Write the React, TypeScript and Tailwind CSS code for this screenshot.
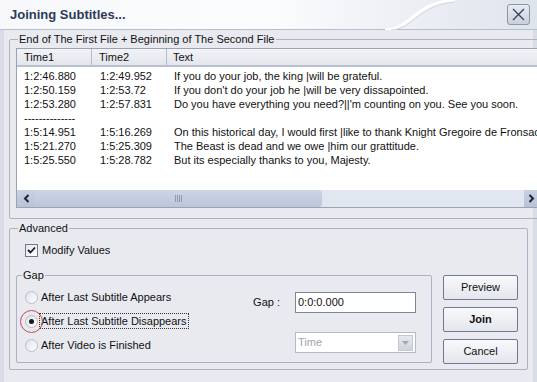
import React from 'react';

const rows = [
  { t1: '1:2:46.880', t2: '1:2:49.952', text: 'If you do your job, the king |will be grateful.' },
  { t1: '1:2:50.159', t2: '1:2:53.72', text: "If you don't do your job he |will be very dissapointed." },
  { t1: '1:2:53.280', t2: '1:2:57.831', text: "Do you have everything you need?||'m counting on you. See you soon." },
  { t1: '--------------', t2: '', text: '' },
  { t1: '1:5:14.951', t2: '1:5:16.269', text: 'On this historical day, I would first |like to thank Knight Gregoire de Fronsac' },
  { t1: '1:5:21.270', t2: '1:5:25.309', text: 'The Beast is dead and we owe |him our grattitude.' },
  { t1: '1:5:25.550', t2: '1:5:28.782', text: 'But its especially thanks to you, Majesty.' },
];

function Radio({ checked, label, focused }: { checked?: boolean; label: string; focused?: boolean }) {
  return (
    <div className="flex items-center h-[24px]">
      <div className="relative w-[13px] h-[13px] ml-[8px] mr-[2px]">
        {focused && (
          <div className="absolute -left-[5px] -top-[5px] w-[23px] h-[23px] rounded-full border border-[#c8474f]" />
        )}
        <div className="w-[13px] h-[13px] rounded-full border border-[#b7bcc8] bg-gradient-to-br from-[#dfe2e9] to-white flex items-center justify-center">
          {checked && <div className="w-[5px] h-[5px] rounded-full bg-[#1a1a1a]" />}
        </div>
      </div>
      <span className={focused ? 'outline outline-1 outline-dotted outline-[#333] px-[1px] leading-[14px]' : 'px-[1px]'}>
        {label}
      </span>
    </div>
  );
}

function Button({ children, bold }: { children: React.ReactNode; bold?: boolean }) {
  return (
    <button className={`w-[75px] h-[25px] border border-[#6f7890] rounded-[2px] bg-gradient-to-b from-[#f8f9fb] to-[#e3e6ec] text-[#111] ${bold ? 'font-bold' : ''}`}>
      {children}
    </button>
  );
}

export default function App() {
  return (
    <div
      className="w-[537px] h-[382px] bg-[#e4e7ee] flex flex-col text-[11px] text-[#111] overflow-hidden"
      style={{ fontFamily: '"Liberation Sans", Arial, sans-serif' }}
    >
      {/* title bar */}
      <div className="relative h-[31px] flex items-center justify-between border-b border-[#b6bdcc] bg-gradient-to-r from-[#f7f8fb] via-[#fbfcfd] to-[#dfe3ec] pl-[10px] pr-[7px]">
        <span className="text-[13px] font-bold text-[#2c3a58]">Joining Subtitles...</span>
        <svg className="absolute left-[385px] top-0" width="70" height="30" viewBox="0 0 70 30">
          <path d="M0 30 C25 30 30 2 70 0" fill="none" stroke="#ffffff" strokeWidth="3" />
          <path d="M6 30 C30 28 35 4 70 2" fill="none" stroke="#d2d7e2" strokeWidth="1" />
        </svg>
        <div className="w-[23px] h-[21px] rounded-[3px] border border-[#8c95ab] bg-gradient-to-b from-[#e9ecf3] to-[#c9cfdc] flex items-center justify-center">
          <svg width="13" height="13" viewBox="0 0 13 13">
            <path d="M1 1 L12 12 M12 1 L1 12" stroke="#3c4660" strokeWidth="1.4" />
          </svg>
        </div>
      </div>

      {/* body */}
      <div className="flex-1 flex flex-col pl-[5px] pr-[5px] pt-[2px] pb-[12px] border-l-[4px] border-r-[4px] border-[#d7dce7] bg-[#e8eaf0]">
        <fieldset className="h-[187px] border border-[#aab2c4] rounded-[2px] pl-[6px] pr-[7px] pb-[8px] pt-0">
          <legend className="ml-[2px] px-[1px] leading-[14px]">End of The First File + Beginning of The Second File</legend>
          <div className="mt-[2px] h-[160px] border border-[#9aa3b5] bg-white flex flex-col">
            <div className="h-[18px] flex border-b-[2px] border-[#b9c0cf] bg-gradient-to-b from-[#f2f3f6] to-[#e3e6ec]">
              <div className="w-[75px] pl-[7px] border-r border-[#b6bccb] leading-[16px]">Time1</div>
              <div className="w-[75px] pl-[7px] border-r border-[#b6bccb] leading-[16px]">Time2</div>
              <div className="flex-1 pl-[6px] leading-[16px]">Text</div>
            </div>
            <div className="flex-1 pt-[2px] whitespace-nowrap overflow-hidden">
              {rows.map((r, i) => (
                <div key={i} className="flex h-[14px] leading-[14px]">
                  <div className="w-[75px] shrink-0 pl-[7px]">{r.t1}</div>
                  <div className="w-[75px] shrink-0 pl-[8px]">{r.t2}</div>
                  <div className="pl-[7px]">{r.text}</div>
                </div>
              ))}
            </div>
            {/* horizontal scrollbar */}
            <div className="h-[17px] flex bg-[#e2e6f0]">
              <div className="w-[18px] bg-gradient-to-b from-[#c9d0e2] to-[#b9c2d8] flex items-center justify-center">
                <svg width="7" height="9" viewBox="0 0 7 9">
                  <path d="M5.5 1 L2 4.5 L5.5 8" fill="none" stroke="#1d2433" strokeWidth="2" />
                </svg>
              </div>
              <div className="w-[287px] bg-gradient-to-b from-[#cdd4e5] to-[#bcc5da] rounded-r-[3px] flex items-center justify-center">
                <svg width="8" height="7" viewBox="0 0 8 7">
                  <path d="M0.5 0 V7 M2.5 0 V7 M4.5 0 V7 M6.5 0 V7" stroke="#8e98b0" strokeWidth="1" />
                </svg>
              </div>
              <div className="flex-1" />
              <div className="w-[16px] bg-gradient-to-b from-[#c9d0e2] to-[#b9c2d8] flex items-center justify-center">
                <svg width="7" height="9" viewBox="0 0 7 9">
                  <path d="M1.5 1 L5 4.5 L1.5 8" fill="none" stroke="#1d2433" strokeWidth="2" />
                </svg>
              </div>
            </div>
          </div>
        </fieldset>

        <fieldset className="mt-[2px] flex-1 border border-[#aab2c4] rounded-[2px] pl-[6px] pr-[9px] pb-[5px] pt-0">
          <legend className="ml-[2px] px-[1px] leading-[14px]">Advanced</legend>
          <div className="flex items-center h-[20px] mt-[5px] pl-[9px]">
            <div className="w-[13px] h-[13px] border border-[#6e7a93] bg-gradient-to-br from-[#e3e6ed] to-white flex items-center justify-center">
              <svg width="9" height="9" viewBox="0 0 9 9">
                <path d="M1 4 L3.5 6.5 L8 1.5" fill="none" stroke="#1a1a1a" strokeWidth="1.8" />
              </svg>
            </div>
            <span className="ml-[4px]">Modify Values</span>
          </div>
          <div className="flex mt-[8px]">
            <fieldset className="w-[416px] h-[95px] border border-[#aab2c4] rounded-[2px] pt-0 pb-0 pl-0 pr-0">
              <legend className="ml-[5px] px-[1px] leading-[14px]">Gap</legend>
              <div className="flex">
                <div className="flex flex-col pt-[3px]">
                  <Radio label="After Last Subtitle Appears" />
                  <Radio label="After Last Subtitle Disappears" checked focused />
                  <Radio label="After Video is Finished" />
                </div>
                <div className="flex-1 flex flex-col items-end pr-[15px] pt-[10px]">
                  <div className="flex items-center">
                    <span className="mr-[15px]">Gap :</span>
                    <div className="w-[121px] h-[21px] border border-[#7c8599] bg-white pl-[2px] leading-[19px]">0:0:0.000</div>
                  </div>
                  <div className="mt-[19px] w-[121px] h-[21px] border border-[#b5bac6] bg-white flex items-center justify-between pl-[2px] pr-[2px]">
                    <span className="text-[#9ea3ad]">Time</span>
                    <div className="w-[15px] h-[16px] bg-gradient-to-b from-[#e6e9ee] to-[#cfd4dd] border border-[#c3c8d2] flex items-center justify-center">
                      <svg width="7" height="4" viewBox="0 0 7 4">
                        <path d="M0 0 H7 L3.5 4 Z" fill="#a3a8b2" />
                      </svg>
                    </div>
                  </div>
                </div>
              </div>
            </fieldset>
            <div className="ml-[11px] pt-[7px] flex flex-col gap-[7px]">
              <Button>Preview</Button>
              <Button bold>Join</Button>
              <Button>Cancel</Button>
            </div>
          </div>
        </fieldset>
      </div>
    </div>
  );
}
